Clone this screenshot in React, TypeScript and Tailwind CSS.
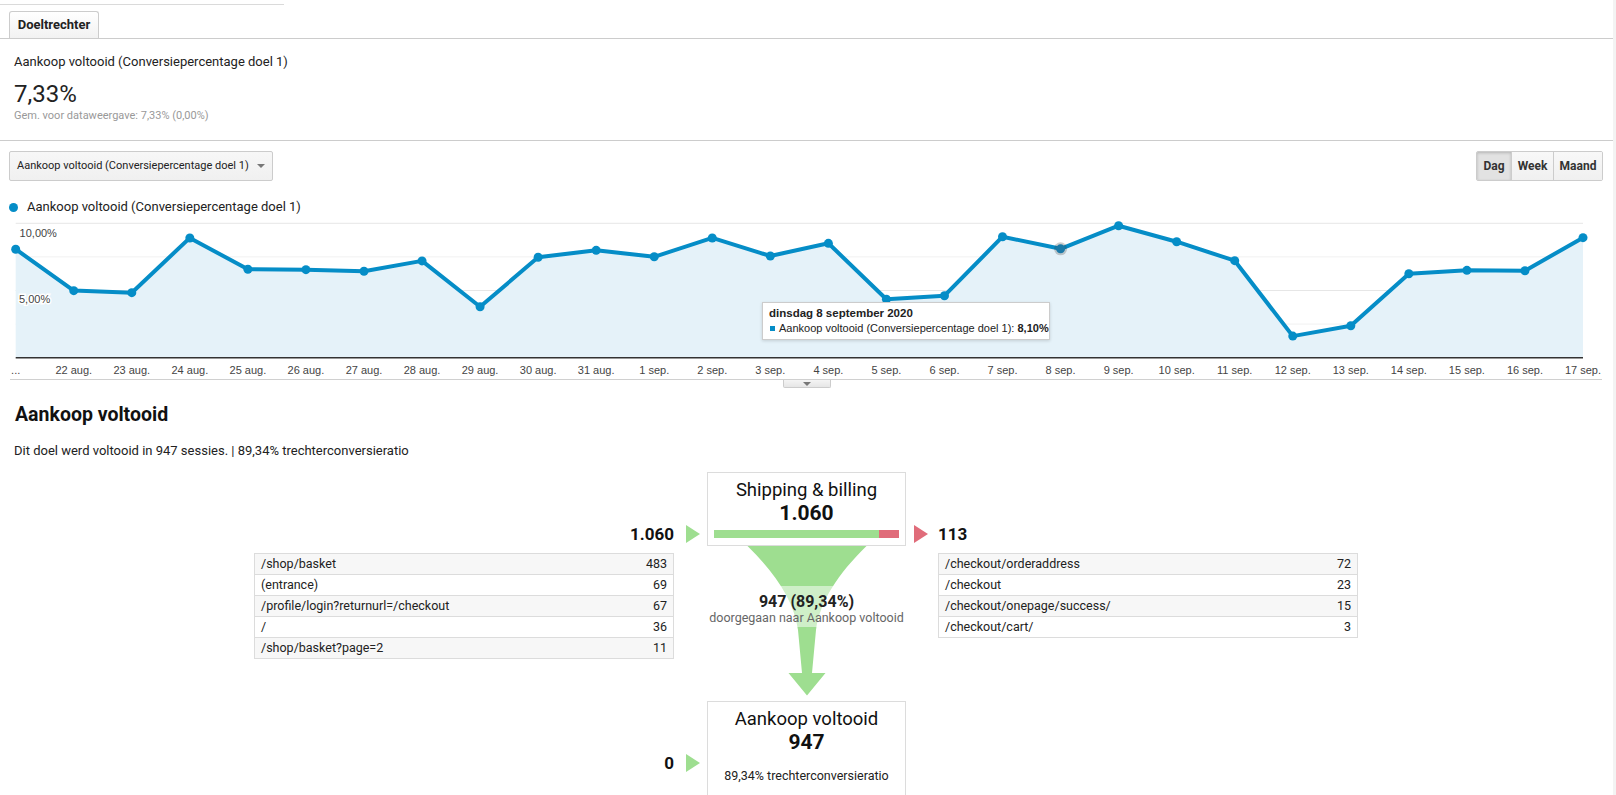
import { Fragment } from "react";

type PageRow = { path: string; count: number };

const chartTop = 217;
const plotLeft = 15.7;
const plotRight = 1583;
const baseY = 357.7 - chartTop;
const pxPerPercent = 13.44;

const days = [
  "...", "22 aug.", "23 aug.", "24 aug.", "25 aug.", "26 aug.", "27 aug.", "28 aug.", "29 aug.",
  "30 aug.", "31 aug.", "1 sep.", "2 sep.", "3 sep.", "4 sep.", "5 sep.", "6 sep.", "7 sep.",
  "8 sep.", "9 sep.", "10 sep.", "11 sep.", "12 sep.", "13 sep.", "14 sep.", "15 sep.",
  "16 sep.", "17 sep.",
];

// conversiepercentage per dag
const rates = [
  8.07, 4.99, 4.84, 8.91, 6.58, 6.55, 6.43, 7.2, 3.79, 7.47, 7.99, 7.51, 8.91, 7.57, 8.51,
  4.35, 4.61, 9.0, 8.1, 9.82, 8.63, 7.22, 1.61, 2.38, 6.25, 6.5, 6.47, 8.93,
];

const hoverIndex = 18;

const entrances: PageRow[] = [
  { path: "/shop/basket", count: 483 },
  { path: "(entrance)", count: 69 },
  { path: "/profile/login?returnurl=/checkout", count: 67 },
  { path: "/", count: 36 },
  { path: "/shop/basket?page=2", count: 11 },
];

const exits: PageRow[] = [
  { path: "/checkout/orderaddress", count: 72 },
  { path: "/checkout", count: 23 },
  { path: "/checkout/onepage/success/", count: 15 },
  { path: "/checkout/cart/", count: 3 },
];

const step = (plotRight - plotLeft) / (rates.length - 1);
const points = rates.map((rate, index) => ({
  x: plotLeft + index * step,
  y: baseY - rate * pxPerPercent,
}));
const linePath = points
  .map((point, index) => `${index === 0 ? "M" : "L"}${point.x.toFixed(1)},${point.y.toFixed(1)}`)
  .join(" ");
const areaPath = `${linePath} L${plotRight},${baseY} L${plotLeft},${baseY} Z`;

function TrendChart() {
  const gridLines = [0, 1, 2, 3].map((index) => baseY - (10 - index * 2.5) * pxPerPercent);

  return (
    <div className="relative">
      <svg width={1613} height={163} className="block" fontFamily="'Liberation Sans', Arial, sans-serif">
        {gridLines.map((y, index) => (
          <line
            key={y}
            x1={plotLeft}
            x2={plotRight}
            y1={y}
            y2={y}
            stroke={index % 2 === 0 ? "#e6e6e6" : "#f1f1f1"}
            strokeWidth={1}
          />
        ))}
        <path d={areaPath} fill="#e5f2f9" />
        <line x1={plotLeft} x2={plotRight} y1={baseY} y2={baseY} stroke="#333" strokeWidth={1.5} />
        <path d={linePath} fill="none" stroke="#058dc7" strokeWidth={4} strokeLinejoin="round" />
        {points.map((point, index) =>
          index === hoverIndex ? (
            <Fragment key={index}>
              <circle cx={point.x} cy={point.y} r={6.5} fill="rgba(60,60,60,0.25)" />
              <circle cx={point.x} cy={point.y} r={4.5} fill="#1b7aa8" />
            </Fragment>
          ) : (
            <circle key={index} cx={point.x} cy={point.y} r={4.5} fill="#058dc7" />
          ),
        )}
        <text x={19.6} y={19.7} fontSize={11} fill="#444" stroke="white" strokeWidth={3} paintOrder="stroke">
          10,00%
        </text>
        <text x={19} y={86.3} fontSize={11} fill="#444" stroke="white" strokeWidth={3} paintOrder="stroke">
          5,00%
        </text>
        {days.map((day, index) => (
          <text key={day} x={points[index].x} y={156.5} fontSize={11} fill="#444" textAnchor="middle">
            {day}
          </text>
        ))}
        <line x1={10} x2={1602} y1={162.5} y2={162.5} stroke="#d0d0d0" strokeWidth={1} />
      </svg>

      <div className="absolute left-[762px] top-[85px] h-[38px] w-[288px] border border-[#ccc] bg-white px-[6px] pt-[3px] whitespace-nowrap shadow-[0_1px_3px_rgba(0,0,0,0.15)] font-['Liberation_Sans',Arial,sans-serif] text-[#222]">
        <p className="text-[11.5px] font-bold leading-[15px]">dinsdag 8 september 2020</p>
        <p className="flex items-center text-[11px] leading-[14px]">
          <span className="mr-[4px] ml-px h-[5px] w-[5px] shrink-0 bg-[#058dc7]" />
          <span>
            Aankoop voltooid (Conversiepercentage doel 1): <b>8,10%</b>
          </span>
        </p>
      </div>
    </div>
  );
}

function PageTable({ rows }: { rows: PageRow[] }) {
  return (
    <div className="border border-[#dcdcdc] text-[12.5px] text-[#222]">
      {rows.map((row, index) => (
        <div
          key={row.path}
          className={`flex items-center justify-between px-[6px] ${
            index > 0 ? "h-[21px] border-t border-[#dcdcdc]" : "h-[20px]"
          } ${index % 2 === 0 ? "bg-[#f7f7f7]" : "bg-white"}`}
        >
          <span>{row.path}</span>
          <span>{row.count}</span>
        </div>
      ))}
    </div>
  );
}

function Arrow({ color }: { color: string }) {
  return (
    <div className="w-[14px] pt-[53px]">
      <div className={`h-0 w-0 border-y-[9px] border-l-[14px] border-y-transparent ${color}`} />
    </div>
  );
}

function Count({ value, align }: { value: string; align: "left" | "right" }) {
  return (
    <div
      className={`flex h-[74px] items-end pb-[2px] text-[17px] font-bold leading-[20px] text-[#111] ${
        align === "right" ? "justify-end" : "justify-start"
      }`}
    >
      {value}
    </div>
  );
}

function FunnelArrow() {
  return (
    <div className="relative h-[150px] w-[199px]">
      <svg width={199} height={150} className="block">
        <path
          d="M40.5,0 H159.5 C131,28 113,55 109,84 L105,127 H118.5 L100,149.5 L81.5,127 H95 L91,84 C87,55 69,28 40.5,0 Z"
          fill="#9ede90"
        />
      </svg>
      <div className="absolute left-0 right-0 top-[40px] flex h-[41px] flex-col items-center bg-white/50 pt-[6px] whitespace-nowrap">
        <span className="text-[16px] font-bold leading-[19px] text-[#222]">947 (89,34%)</span>
        <span className="text-[12.5px] leading-[13px] text-[#666]">doorgegaan naar Aankoop voltooid</span>
      </div>
    </div>
  );
}

export default function App() {
  return (
    <div className="flex min-h-[795px] bg-white font-[Roboto,'Noto_Sans',sans-serif] text-[#222]">
      <main className="w-[1613px]">
        <div className="h-[4px]" />
        <div className="h-px w-[284px] bg-[#dadada]" />
        <div className="flex border-b border-[#cccccc] px-[9px] pt-[6px]">
          <div className="flex h-[27px] w-[90px] items-center justify-center rounded-t-[3px] border border-b-0 border-[#cccccc] bg-linear-to-b from-white to-[#f2f2f2] text-[13px] font-bold text-[#222]">
            Doeltrechter
          </div>
        </div>

        <section className="border-b border-[#cccccc] px-[14px] pt-[13px] pb-[17px]">
          <p className="text-[13px] leading-[20px]">Aankoop voltooid (Conversiepercentage doel 1)</p>
          <p className="mt-[8px] text-[24px] leading-[28px] text-[#222]">7,33%</p>
          <p className="mt-px text-[11px] leading-[14px] text-[#999]">Gem. voor dataweergave: 7,33% (0,00%)</p>
        </section>

        <div className="flex items-center justify-between pt-[10px] pr-[10px] pl-[9px]">
          <div className="flex h-[30px] w-[264px] items-center justify-between rounded-[2px] border border-[#cccccc] bg-linear-to-b from-[#f7f7f7] to-[#f0f0f0] pr-[7px] pl-[7px] text-[11px] whitespace-nowrap text-[#222]">
            <span>Aankoop voltooid (Conversiepercentage doel 1)</span>
            <span className="h-0 w-0 border-x-[4px] border-t-[4px] border-x-transparent border-t-[#777]" />
          </div>
          <div className="flex h-[30px] overflow-hidden rounded-[2px] border border-[#cccccc] text-[12px] font-bold text-[#333]">
            <span className="flex w-[34px] items-center justify-center bg-[#e2e2e2] shadow-[inset_0_1px_3px_rgba(0,0,0,0.2)]">
              Dag
            </span>
            <span className="flex w-[42px] items-center justify-center border-l border-[#cccccc] bg-linear-to-b from-[#f8f8f8] to-[#f0f0f0]">
              Week
            </span>
            <span className="flex w-[49px] items-center justify-center border-l border-[#cccccc] bg-linear-to-b from-[#f8f8f8] to-[#f0f0f0]">
              Maand
            </span>
          </div>
        </div>

        <div className="mt-[16px] flex items-center pl-[9px] text-[13px] leading-[20px]">
          <span className="mr-[9px] h-[9px] w-[9px] rounded-full bg-[#058dc7]" />
          Aankoop voltooid (Conversiepercentage doel 1)
        </div>

        <TrendChart />
        <div className="flex justify-center">
          <div className="flex h-[8px] w-[48px] items-center justify-center rounded-b-[2px] border border-t-0 border-[#cccccc] bg-linear-to-b from-[#f4f4f4] to-[#e6e6e6]">
            <span className="h-0 w-0 border-x-[4px] border-t-[4px] border-x-transparent border-t-[#777]" />
          </div>
        </div>

        <h2 className="mt-[15px] pl-[15px] text-[19.5px] font-bold leading-[24px] text-[#111]">Aankoop voltooid</h2>
        <p className="mt-[15px] pl-[14px] text-[13px] leading-[18px]">
          Dit doel werd voltooid in 947 sessies. | 89,34% trechterconversieratio
        </p>

        <div className="mt-[12px] flex items-start">
          <div className="w-[254px] shrink-0" />
          <div className="w-[420px] shrink-0">
            <Count value="1.060" align="right" />
            <div className="mt-[7px]">
              <PageTable rows={entrances} />
            </div>
          </div>
          <div className="ml-[12px]">
            <Arrow color="border-l-[#9ede90]" />
          </div>
          <div className="ml-[7px] flex w-[199px] shrink-0 flex-col">
            <div className="flex h-[74px] flex-col items-center border border-[#dcdcdc] bg-white px-[6px] pt-[6px]">
              <span className="text-[18.5px] leading-[22px] text-[#111]">Shipping &amp; billing</span>
              <span className="text-[21px] font-bold leading-[24px] text-[#111]">1.060</span>
              <div className="mt-[5px] flex h-[8px] w-full">
                <div className="flex-1 bg-[#9ede90]" />
                <div className="w-[20px] bg-[#e06c7a]" />
              </div>
            </div>
            <FunnelArrow />
          </div>
          <div className="ml-[8px]">
            <Arrow color="border-l-[#e06c7a]" />
          </div>
          <div className="ml-[10px] w-[420px] shrink-0">
            <Count value="113" align="left" />
            <div className="mt-[7px]">
              <PageTable rows={exits} />
            </div>
          </div>
        </div>

        <div className="mt-[5px] flex items-start">
          <div className="w-[254px] shrink-0" />
          <div className="w-[420px] shrink-0">
            <Count value="0" align="right" />
          </div>
          <div className="ml-[12px]">
            <Arrow color="border-l-[#9ede90]" />
          </div>
          <div className="ml-[7px] flex h-[100px] w-[199px] shrink-0 flex-col items-center border border-[#dcdcdc] bg-white pt-[6px]">
            <span className="text-[18.5px] leading-[22px] text-[#111]">Aankoop voltooid</span>
            <span className="text-[21px] font-bold leading-[24px] text-[#111]">947</span>
            <span className="mt-[14px] text-[12.5px] leading-[16px] text-[#222]">89,34% trechterconversieratio</span>
          </div>
        </div>
      </main>
      <div className="w-[3px] bg-[#f3f3f3]" />
    </div>
  );
}
